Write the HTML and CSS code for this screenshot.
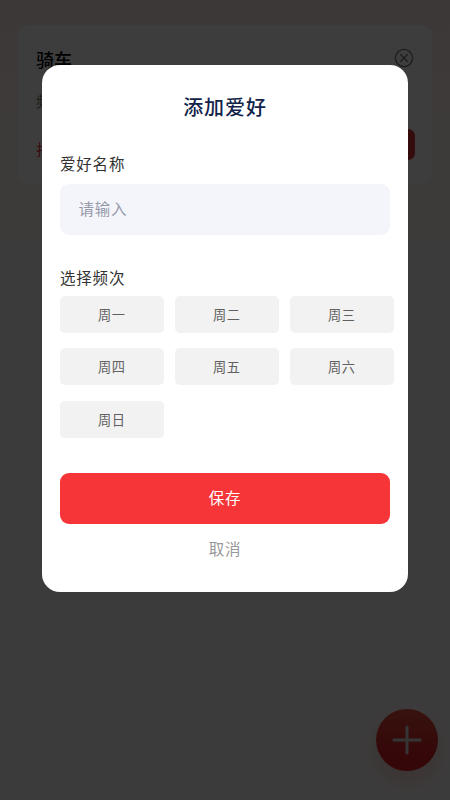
FILE: index.html
```html
<!DOCTYPE html>
<html lang="zh-CN">
<head>
<meta charset="utf-8">
<meta name="viewport" content="width=device-width, initial-scale=1">
<title>添加爱好</title>
<link rel="stylesheet" href="styles.css">
</head>
<body>
<main class="page">
  <section class="card">
    <div class="card-head">
      <h2 class="card-title">骑车</h2>
      <svg class="close" viewBox="0 0 20 20" fill="none" stroke="#777" stroke-width="1.3"><circle cx="10" cy="10" r="8.6"/><path d="M6.3 6.3l7.4 7.4M13.7 6.3l-7.4 7.4"/></svg>
    </div>
    <p class="card-freq">频次</p>
    <div class="card-foot"><span class="status">打卡</span><span class="check"></span></div>
  </section>
</main>
<div class="fab"><svg viewBox="0 0 62 62" stroke="#ddd" stroke-width="3" stroke-linecap="round"><path d="M31 18v26M18 31h26"/></svg></div>
<div class="overlay">
  <form class="modal">
    <h1 class="title">添加爱好</h1>
    <label class="label" for="name">爱好名称</label>
    <input class="input" id="name" type="text" placeholder="请输入">
    <div class="label label-freq">选择频次</div>
    <div class="days">
      <button type="button" class="day">周一</button>
      <button type="button" class="day">周二</button>
      <button type="button" class="day">周三</button>
      <button type="button" class="day">周四</button>
      <button type="button" class="day">周五</button>
      <button type="button" class="day">周六</button>
      <button type="button" class="day">周日</button>
    </div>
    <button type="button" class="save">保存</button>
    <button type="button" class="cancel">取消</button>
  </form>
</div>
</body>
</html>
```
FILE: styles.css
```css
* { box-sizing: border-box; }
body {
  margin: 0;
  height: 800px;
  overflow: hidden;
  font-family: "Noto Sans CJK SC", sans-serif;
  background: linear-gradient(#ffe9e7 0, #fff0ec 80px, #f9f7f1 150px, #f9f7f1 235px, #faf5f5 245px, #faf5f5 600px, #f9f7f7 800px);
}
button, input { font-family: inherit; border: 0; padding: 0; margin: 0; }
.page { padding: 25px 18px; }
.card {
  height: 158px;
  padding: 21px 18px 0;
  border-radius: 9px;
  background: #fff;
}
.card-head { display: flex; justify-content: space-between; height: 24px; }
.card-title { margin: 0; font-size: 18px; line-height: 26px; font-weight: 500; color: #000; }
.close { width: 20px; height: 20px; margin: 2px 0 0; }
.card-freq { margin: 20px 0 0; font-size: 15px; line-height: 22px; color: #777; }
.card-foot { display: flex; justify-content: space-between; align-items: center; margin-top: 17px; height: 31px; }
.status { margin-top: 8px; font-size: 15px; line-height: 20px; color: #f43537; }
.check { width: 75px; height: 31px; margin-right: -1px; border-radius: 7px; background: #e03030; }
.fab {
  position: absolute;
  left: 376.4px;
  top: 709.4px;
  width: 62px;
  height: 62px;
  border-radius: 50%;
  background: linear-gradient(#e45040, #dc2024 70%);
  box-shadow: 0 10px 22px rgba(244, 53, 55, .2);
}
.fab svg { display: block; width: 62px; height: 62px; }
.overlay {
  position: absolute;
  inset: 0;
  display: flex;
  align-items: flex-start;
  justify-content: center;
  padding-top: 65.4px;
  background: rgba(0, 0, 0, .76);
}
.modal {
  display: flex;
  flex-direction: column;
  width: 366.5px;
  height: 527px;
  padding: 27px 18.25px 0;
  border-radius: 18px;
  background: #fff;
}
.title {
  margin: 0;
  font-size: 20px;
  line-height: 30px;
  font-weight: 500;
  letter-spacing: .9px;
  text-align: center;
  color: #12234a;
}
.label { margin-top: 29px; font-size: 15.5px; line-height: 24px; letter-spacing: .8px; color: #333; }
.input {
  width: 100%;
  height: 51px;
  margin-top: 8.6px;
  padding: 0 18.5px 3px;
  border-radius: 9px;
  background: #f4f5fb;
  font-size: 15.5px;
  letter-spacing: .7px;
  outline: none;
}
.input::placeholder { color: #9699a9; opacity: 1; }
.label-freq { margin-top: 30px; }
.days {
  display: grid;
  grid-template-columns: repeat(3, 103.5px);
  grid-auto-rows: 37px;
  gap: 15.5px 11.5px;
  margin-top: 7px;
}
.day {
  border-radius: 5px;
  background: #f2f2f2;
  font-size: 13.2px;
  letter-spacing: .6px;
  color: #606060;
}
.save {
  height: 51px;
  margin-top: 35px;
  padding-bottom: 2px;
  border-radius: 9px;
  background: #f53537;
  color: #fff;
  font-size: 15.5px;
  letter-spacing: .7px;
}
.cancel {
  height: 30px;
  margin-top: 9px;
  background: none;
  color: #999;
  font-size: 15.5px;
  letter-spacing: .7px;
}
```
